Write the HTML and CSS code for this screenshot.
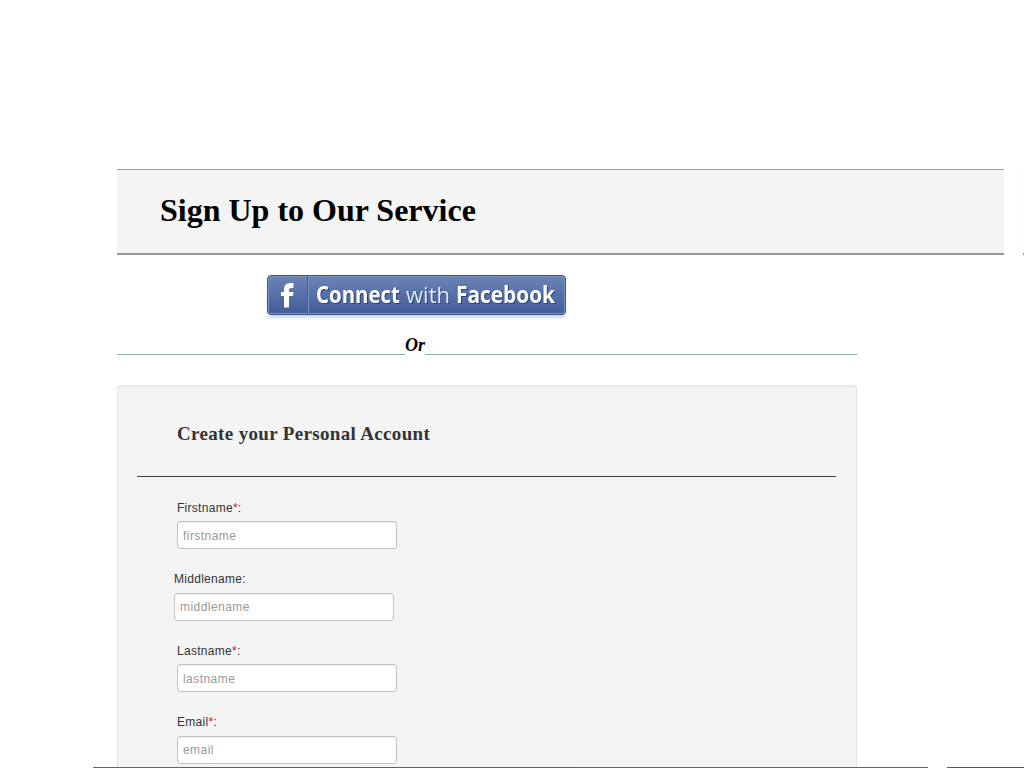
FILE: index.html
```html
<!DOCTYPE html>
<html lang="en">
<head>
<meta charset="utf-8">
<title>Sign Up</title>
<link rel="stylesheet" href="styles.css">
</head>
<body>
<div class="page">
  <div class="top">
    <header class="banner"><h1><span>Sign Up to Our Service</span></h1></header>
    <div class="banner-next"></div>
  </div>
  <main class="content">
    <a class="connect" aria-label="Connect with Facebook">
      <svg width="304" height="48" viewBox="0 0 304 48">
        <defs>
          <linearGradient id="face" x1="0" y1="0" x2="0" y2="1">
            <stop offset="0" stop-color="#6c84b6"/>
            <stop offset="1" stop-color="#405b98"/>
          </linearGradient>
          <filter id="soft" x="-5%" y="-20%" width="110%" height="150%"><feGaussianBlur stdDeviation="1.5"/></filter>
        </defs>
        <rect x="3" y="6" width="297" height="38" rx="4" fill="#d3d8e2" filter="url(#soft)"/>
        <rect x="2.5" y="1.5" width="298" height="39" rx="3.5" fill="url(#face)" stroke="#3b5286"/>
        <rect x="3.5" y="2.5" width="296" height="37" rx="2.5" fill="none" stroke="#7f95c2"/>
        <path d="M42.5 2v38" stroke="#3d5892"/>
        <path d="M43.500 3v36" stroke="#8196c3"/>
        <path d="M19 33.500V22h-3v-4h3v-3q0-6 6.500-6h3v5h-2.500q-2 0-2 2v2h4.500l-.5 4h-4v11.500z" fill="#fff"/>
        <g class="connect-text">
          <text class="strong" x="51" y="28.500" textLength="84" lengthAdjust="spacingAndGlyphs">Connect</text>
          <text class="light" x="141" y="28.500" textLength="44" lengthAdjust="spacingAndGlyphs">with</text>
          <text class="strong" x="191" y="28.500" textLength="99" lengthAdjust="spacingAndGlyphs">Facebook</text>
        </g>
      </svg>
    </a>
    <div class="divider"><span class="or">Or</span></div>
    <form class="panel">
      <h2><span>Create your Personal Account</span></h2>
      <div class="field"><label for="first">Firstname<b>*</b>:</label><input id="first" placeholder="firstname"></div>
      <div class="field shifted"><label for="middle">Middlename:</label><input id="middle" placeholder="middlename"></div>
      <div class="field"><label for="last">Lastname<b>*</b>:</label><input id="last" placeholder="lastname"></div>
      <div class="field raised"><label for="email">Email<b>*</b>:</label><input id="email" placeholder="email"></div>
    </form>
  </main>
  <div class="strip"><i class="strip-main"></i><i class="strip-next"></i></div>
</div>
</body>
</html>
```
FILE: styles.css
```css
* { box-sizing: border-box; }
body { margin: 0; background: #fff; font-family: "Liberation Sans", Arial, sans-serif; }
.page { position: relative; width: 1024px; height: 768px; overflow: hidden; padding: 169px 0 0 117px; }
.top { display: flex; gap: 19px; }
.banner { width: 887px; height: 86px; background: #f4f4f4; border-top: 1px solid #a0a0a0; border-bottom: 2px solid #999; padding: 22px 0 0 43px; }
.banner-next { width: 1px; height: 86px; background: #fafafa; border-bottom: 2px solid #999; }
h1 { margin: 0; font: bold 32px/37px "Liberation Serif", "Times New Roman", serif; color: #000; white-space: nowrap; }
.content { width: 740px; }
.connect { display: block; width: 304px; height: 48px; margin: 19px 0 0 148px; }
.connect svg { display: block; }
.connect-text { font-family: "Open Sans", sans-serif; font-size: 22.500px; fill: #fff; filter: drop-shadow(1px 1px 0 #2c4478); }
.strong { font-weight: 700; }
.light { font-weight: 400; fill: #e6ebf5; }
.divider { display: flex; align-items: flex-end; height: 33px; font: italic bold 18px/18px "Liberation Serif", "Times New Roman", serif; }
.divider::before { content: ""; width: 288px; border-bottom: 1px solid #8fb0aa; }
.divider::after { content: ""; flex: 1; border-bottom: 1px solid #8fb0aa; }
.or { width: 20px; height: 19px; white-space: nowrap; }
.panel { width: 740px; height: 450px; margin-top: 30px; padding: 0 20px; background: #f4f4f4; border: 1px solid #e3e3e3; border-top: 2px solid #e9e9e9; border-radius: 4px; }
h2 { margin: 0 0 22px -1px; width: 699px; height: 90px; padding: 35px 0 0 40px; border-bottom: 1px solid #404040; font: bold 19px/24px "Liberation Serif", "Times New Roman", serif; letter-spacing: 0.34px; color: #333; white-space: nowrap; }
.field { height: 71.500px; margin-left: 39px; font-size: 12px; color: #333; }
.shifted { margin-left: 36px; }
label { display: block; height: 22px; line-height: 18px; letter-spacing: 0.28px; }
.shifted label, .raised label { line-height: 17px; }
label b { font-weight: normal; color: #c8102e; }
input { display: block; width: 220px; height: 28px; padding: 1px 5px 0; border: 1px solid #c4c4c4; border-radius: 3px; background: #fff; box-shadow: inset 0 1px 1px #ececec; font: 12px "Liberation Sans", Arial, sans-serif; letter-spacing: 0.45px; }
input::placeholder { color: #999; opacity: 1; }
.strip { position: absolute; left: 93px; right: 0; bottom: 0; display: flex; gap: 19px; height: 1px; }
.strip-main { width: 835px; background: linear-gradient(90deg, #398439 0, #3f8048 80px, #3c6a80 130px, #40669c 300px, #416b98 100%); }
.strip-next { flex: 1; background: #2b648c; }
```
